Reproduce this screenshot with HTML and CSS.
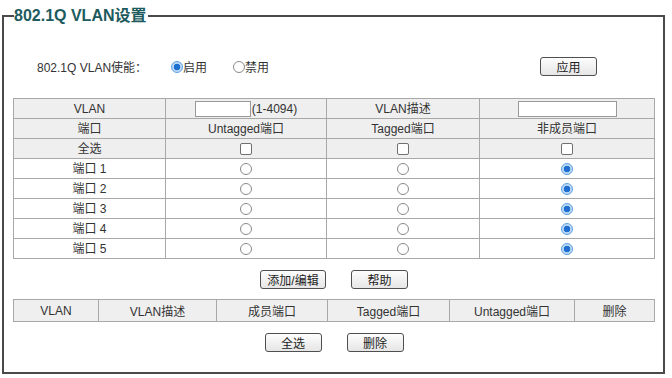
FILE: index.html
```html
<html>
    <head>
        <meta charset="UTF-8" />
        <link rel="stylesheet" href="styles.css">
    </head>
    <body>
        <fieldset class="panel">
            <legend>802.1Q VLAN设置</legend>
            <div class="enable_row">
                <span class="enable_label">802.1Q VLAN使能：</span>
                <label class="opt"><input type="radio" name="enable" checked />启用</label>
                <label class="opt"><input type="radio" name="enable" />禁用</label>
                <button class="btn apply">应用</button>
            </div>

            <table class="grid edit">
                <colgroup>
                    <col style="width:152px" />
                    <col style="width:161px" />
                    <col style="width:153px" />
                    <col />
                </colgroup>
                <tr class="head">
                    <td>VLAN</td>
                    <td><input class="txt vid" type="text" />(1-4094)</td>
                    <td>VLAN描述</td>
                    <td><input class="txt desc" type="text" /></td>
                </tr>
                <tr class="head">
                    <td>端口</td>
                    <td>Untagged端口</td>
                    <td>Tagged端口</td>
                    <td>非成员端口</td>
                </tr>
                <tr class="head">
                    <td>全选</td>
                    <td><input type="checkbox" /></td>
                    <td><input type="checkbox" /></td>
                    <td><input type="checkbox" /></td>
                </tr>
                <tr>
                    <td>端口 1</td>
                    <td><input type="radio" name="p1" /></td>
                    <td><input type="radio" name="p1" /></td>
                    <td><input type="radio" name="p1" checked /></td>
                </tr>
                <tr>
                    <td>端口 2</td>
                    <td><input type="radio" name="p2" /></td>
                    <td><input type="radio" name="p2" /></td>
                    <td><input type="radio" name="p2" checked /></td>
                </tr>
                <tr>
                    <td>端口 3</td>
                    <td><input type="radio" name="p3" /></td>
                    <td><input type="radio" name="p3" /></td>
                    <td><input type="radio" name="p3" checked /></td>
                </tr>
                <tr>
                    <td>端口 4</td>
                    <td><input type="radio" name="p4" /></td>
                    <td><input type="radio" name="p4" /></td>
                    <td><input type="radio" name="p4" checked /></td>
                </tr>
                <tr>
                    <td>端口 5</td>
                    <td><input type="radio" name="p5" /></td>
                    <td><input type="radio" name="p5" /></td>
                    <td><input type="radio" name="p5" checked /></td>
                </tr>
            </table>

            <div class="btn_row first">
                <button class="btn wide">添加/编辑</button>
                <button class="btn">帮助</button>
            </div>

            <table class="grid list">
                <colgroup>
                    <col style="width:85px" />
                    <col style="width:118px" />
                    <col style="width:111px" />
                    <col style="width:122px" />
                    <col style="width:125px" />
                    <col />
                </colgroup>
                <tr class="head">
                    <td>VLAN</td>
                    <td>VLAN描述</td>
                    <td>成员端口</td>
                    <td>Tagged端口</td>
                    <td>Untagged端口</td>
                    <td>删除</td>
                </tr>
            </table>

            <div class="btn_row last">
                <button class="btn">全选</button>
                <button class="btn">删除</button>
            </div>
        </fieldset>
    </body>
</html>
```

FILE: styles.css
```css
body {
    margin: 0;
    font-family: "Liberation Sans", "Noto Sans CJK SC", sans-serif;
    font-size: 12px;
    color: #333;
    background: #fff;
}
* {
    box-sizing: border-box;
}
table {
    font-size: inherit;
    color: inherit;
}

.panel {
    margin: 6px 7px 0 2px;
    padding: 0 8px 20px 9px;
    border: 2px solid #4a4a4a;
    min-width: 0;
}

.panel legend {
    padding: 0 1px 0 0;
    margin-left: 1px;
    font-size: 16px;
    font-weight: bold;
    line-height: 20px;
    color: #1d5b5e;
}

.enable_row {
    display: flex;
    align-items: center;
    height: 19px;
    margin-top: 31px;
    padding-left: 24px;
}

.enable_label {
    width: 134px;
}

.opt {
    display: flex;
    align-items: center;
    margin-right: 26px;
}

.opt input {
    margin: 0 3px 0 0;
}

.apply {
    margin-left: auto;
    margin-right: 58px;
}

input[type="radio"] {
    appearance: none;
    width: 12px;
    height: 12px;
    margin: 0;
    border: 1px solid #8a8a8a;
    border-radius: 50%;
    background: #fff;
    vertical-align: middle;
}

input[type="radio"]:checked {
    border-color: #5aa0e6;
    background: radial-gradient(circle, #1f6fd1 0 3px, #bcd8f5 3.6px);
}

input[type="checkbox"] {
    appearance: none;
    width: 12px;
    height: 12px;
    margin: 0;
    border: 1px solid #707070;
    border-radius: 2px;
    background: #fff;
    vertical-align: middle;
}

.grid {
    width: 642px;
    border-collapse: collapse;
    table-layout: fixed;
}

.grid td {
    border: 1px solid #a8a8a8;
    text-align: center;
    padding: 0;
    white-space: nowrap;
}

.grid tr.head td {
    background: #efefef;
}

.edit {
    margin-top: 22px;
}

.edit td {
    height: 20px;
    line-height: 18px;
}

.list {
    margin-top: 10px;
}

.list td {
    height: 22px;
    background: #ececec;
}

.txt {
    height: 16px;
    margin: 0;
    padding: 0 2px;
    border: 1px solid #999;
    background: #fff;
    vertical-align: middle;
}

.txt.vid {
    width: 56px;
    margin-right: 1px;
}

.txt.desc {
    width: 99px;
}

.btn_row {
    display: flex;
    justify-content: center;
    gap: 25px;
}

.btn_row.first {
    margin-top: 11px;
}

.btn_row.last {
    margin-top: 11px;
}

.btn {
    width: 57px;
    height: 19px;
    padding: 0;
    font-family: inherit;
    font-size: 12px;
    color: #222;
    border: 1px solid #4f4f4f;
    border-radius: 3px;
    background: linear-gradient(#fdfdfd, #e6e6e6);
}

.btn.wide {
    width: 66px;
}
```
